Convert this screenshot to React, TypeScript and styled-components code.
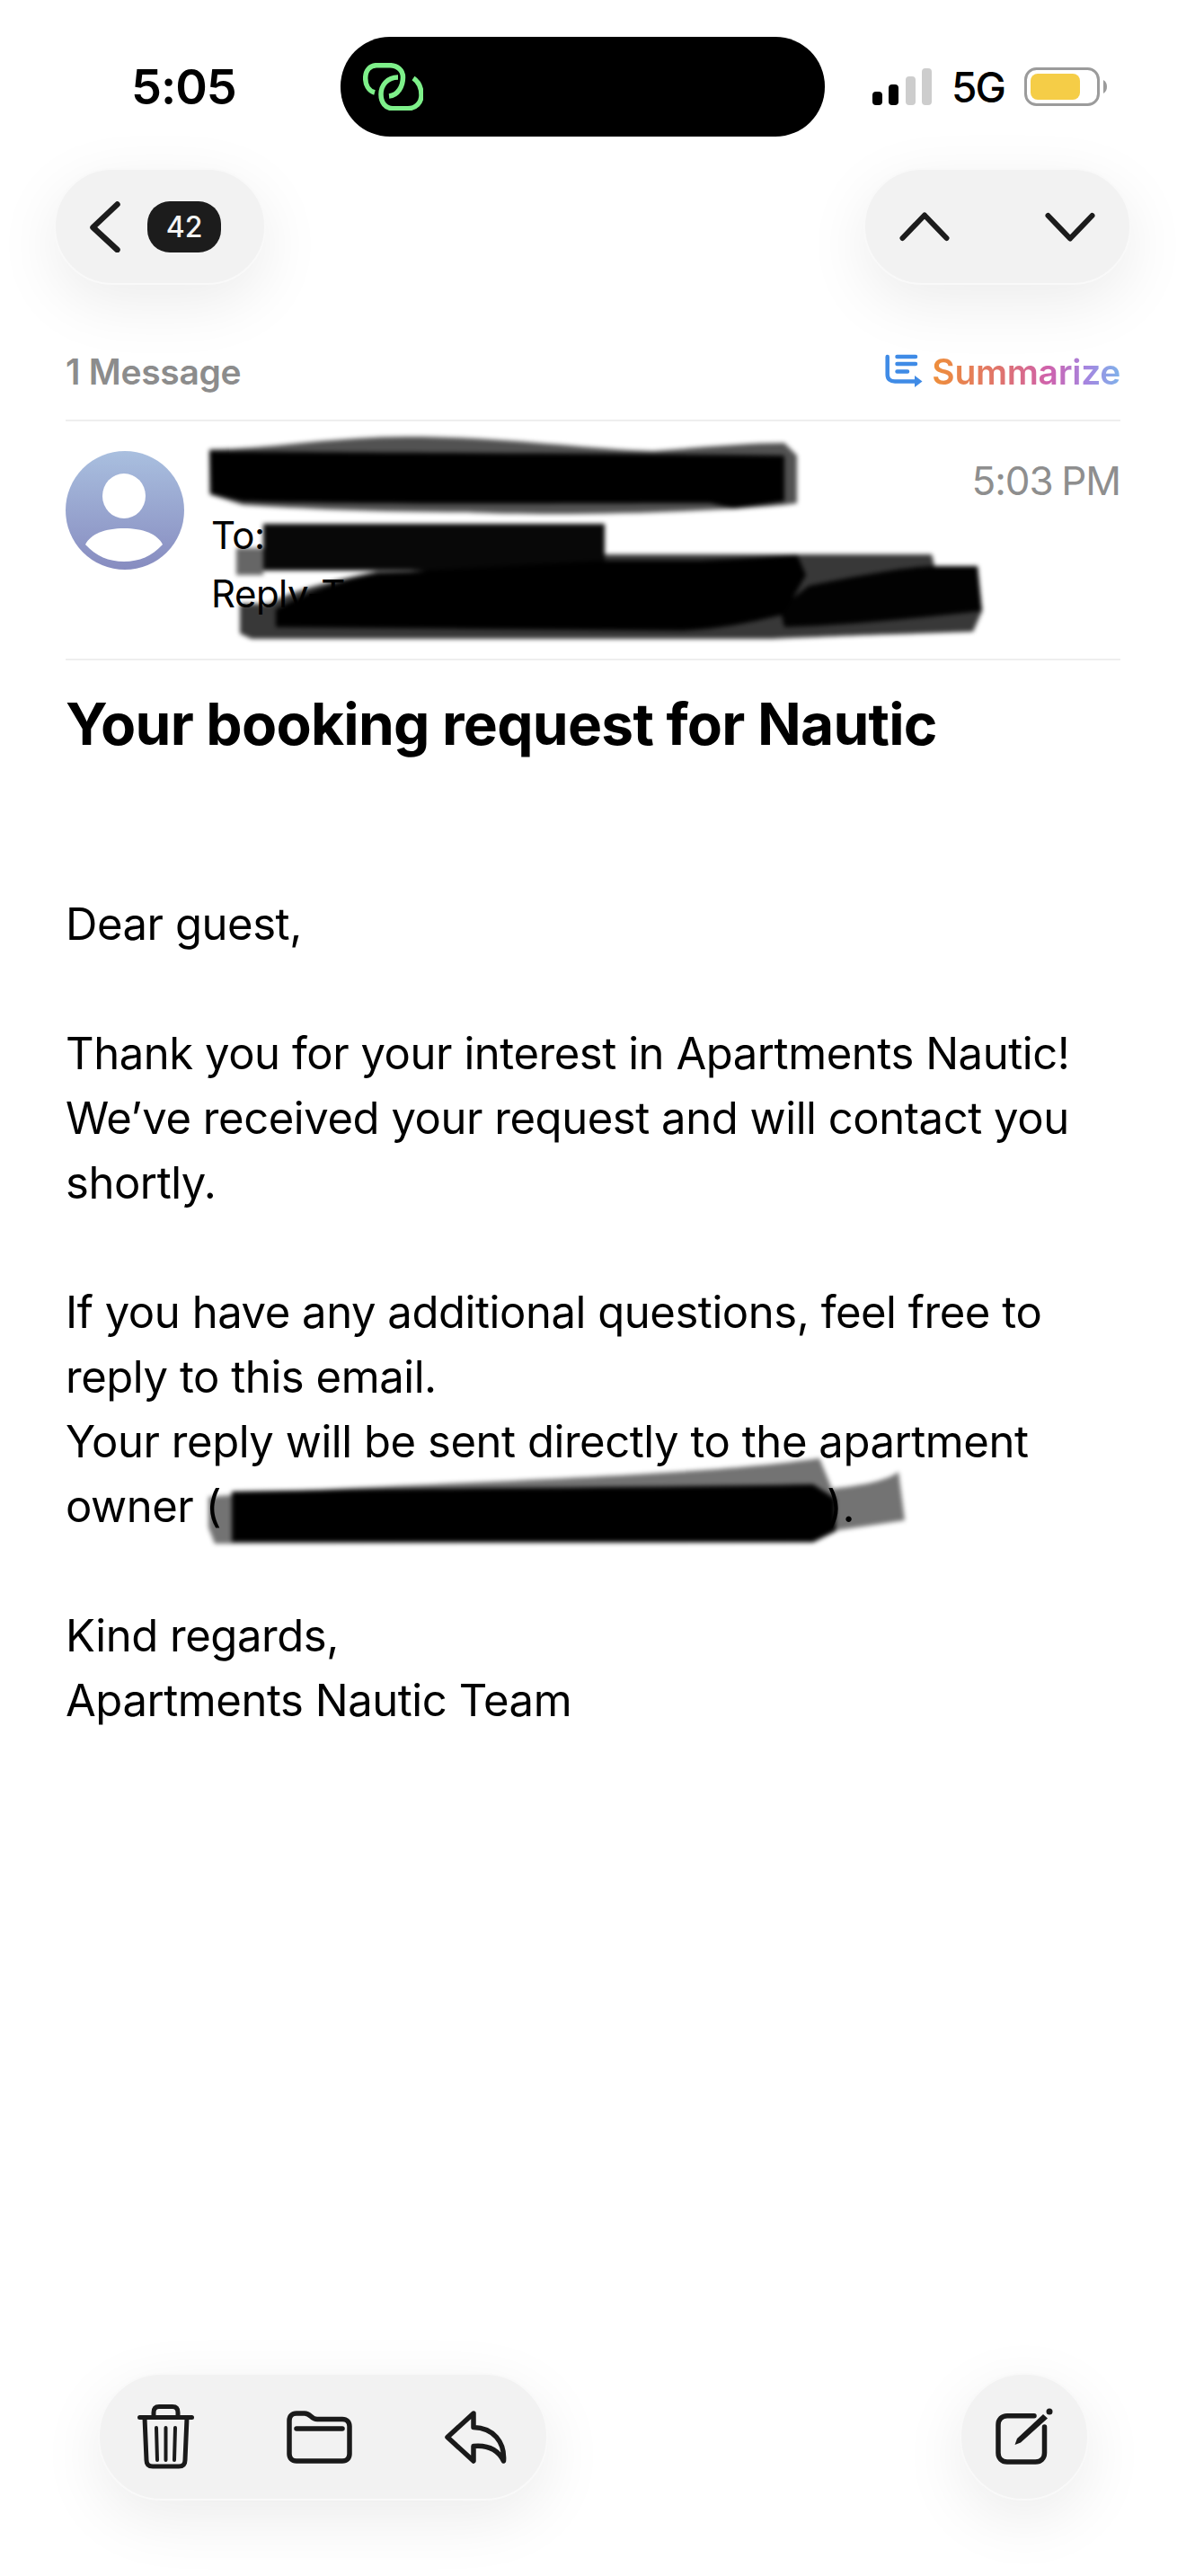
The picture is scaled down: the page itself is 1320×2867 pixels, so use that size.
import React from "react";
import styled, { createGlobalStyle } from "styled-components";

const GlobalStyle = createGlobalStyle`
    html, body {
        margin: 0;
        padding: 0;
        background: #fff;
    }
    body {
        font-family: Inter, "Liberation Sans", sans-serif;
        color: #000;
    }
`;

const Page = styled.div`
    position: relative;
    width: 1320px;
    height: 2867px;
    overflow: hidden;
    display: flex;
    flex-direction: column;
    background: #fff;
`;

const StatusBar = styled.div`
    display: flex;
    align-items: center;
    padding: 41px 0 0 146px;
    height: 111px;
`;
const Clock = styled.div`
    width: 233px;
    font-size: 54px;
    font-weight: 600;
    line-height: 60px;
    letter-spacing: -1px;
`;
const Island = styled.div`
    width: 539px;
    height: 111px;
    border-radius: 55px;
    background: #000;
    display: flex;
    align-items: center;
    padding-left: 25px;
    box-sizing: border-box;
`;
const StatusRight = styled.div`
    display: flex;
    align-items: center;
    margin-left: 53px;
`;
const Network = styled.span`
    font-size: 46px;
    font-weight: 500;
    line-height: 50px;
    margin: 0 22px 0 22px;
    letter-spacing: -2px;
`;

const NavRow = styled.div`
    display: flex;
    justify-content: space-between;
    margin-top: 35px;
    padding: 0 61px 0 60px;
`;
const Glass = styled.div<{ $w: number; $h: number }>`
    width: ${props => props.$w}px;
    height: ${props => props.$h}px;
    box-sizing: border-box;
    border-radius: ${props => props.$h / 2}px;
    background: #f2f2f2;
    border: 2px solid #f9f9f9;
    box-shadow: 0 20px 70px rgba(0, 0, 0, .08);
    display: flex;
    align-items: center;
`;
const BackGlass = styled(Glass)`
    padding-left: 38px;
`;
const ArrowGlass = styled(Glass)`
    justify-content: space-between;
    padding: 0 38px;
`;
const Badge = styled.div`
    width: 82px;
    height: 57px;
    margin-left: 30px;
    border-radius: 25px;
    background: #1c1c1c;
    color: #f4f4f4;
    font-size: 32px;
    font-weight: 500;
    display: flex;
    align-items: center;
    justify-content: center;
`;

const Content = styled.div`
    padding: 0 73px;
`;
const MessageBar = styled.div`
    display: flex;
    justify-content: space-between;
    align-items: center;
    margin-top: 73px;
    height: 46px;
    padding-bottom: 31px;
    border-bottom: 2px solid #eeeeee;
`;
const MessageCount = styled.div`
    font-size: 39px;
    font-weight: 600;
    color: #8c8c8c;
    letter-spacing: -.3px;
`;
const SummarizeWrap = styled.div`
    display: flex;
    align-items: center;
    gap: 10px;
`;
const SummarizeText = styled.span`
    font-size: 39px;
    font-weight: 600;
    letter-spacing: -.3px;
    background: linear-gradient(90deg, #ee8f3a 0%, #e0746a 35%, #cf62ad 62%, #a585e0 82%, #7fb2ea 100%);
    -webkit-background-clip: text;
    background-clip: text;
    color: transparent;
`;

const SenderBlock = styled.div`
    display: flex;
    padding: 33px 0 40px;
    border-bottom: 2px solid #eeeeee;
`;
const SenderInfo = styled.div`
    flex: 1;
    margin-left: 30px;
    padding-top: 61px;
`;
const SenderLine = styled.div`
    font-size: 42px;
    line-height: 65px;
    letter-spacing: -.5px;
`;
const SentAt = styled.div`
    margin-top: 8px;
    font-size: 44px;
    line-height: 50px;
    color: #8e8e8e;
    letter-spacing: -1px;
    word-spacing: -2px;
`;

const Subject = styled.h1`
    margin: 32px 0 148px;
    font-size: 64px;
    font-weight: 700;
    line-height: 78px;
    letter-spacing: -.75px;
`;
const Body = styled.div`
    font-size: 49px;
    line-height: 72px;
    letter-spacing: -.45px;
`;
const Para = styled.p`
    margin: 0 0 72px;
`;
const Hidden = styled.span`
    display: inline-block;
    width: 674px;
`;

const Toolbar = styled.div`
    display: flex;
    justify-content: space-between;
    margin-top: auto;
    padding: 0 108px 84px 109px;
`;
const ToolGroup = styled(Glass)`
    padding: 0 44px 0 42px;
    justify-content: space-between;
`;
const ComposeButton = styled(Glass)`
    justify-content: center;
`;

const Redactions = styled.svg`
    position: absolute;
    top: 0;
    left: 0;
    pointer-events: none;
`;

const LinkIcon = () => (
    <svg width="67" height="53" viewBox="0 0 67 53" fill="none" stroke="#7ef08a" strokeWidth="5.500">
        <path d="M13 33 C6 31 2.700 24 2.700 17 C2.700 8 8 2.700 15 2.700 H30 C38 2.700 44.500 8 44.500 16 C44.500 26 39 36 29 37" />
        <path d="M39 16 C27 16 20 25 20 35 C20 44 25 50.700 33 50.700 H50 C59 50.700 65 44 65 36 C65 28 62 21 56 17" />
    </svg>
);
const BackIcon = () => (
    <svg width="34" height="57" viewBox="0 0 34 57" fill="none" stroke="#1c1c1c" strokeWidth="6.500" strokeLinecap="round" strokeLinejoin="round">
        <path d="M30.500 3.500 L3.500 29 L30.500 54" />
    </svg>
);
const UpIcon = () => (
    <svg width="56" height="33" viewBox="0 0 56 33" fill="none" stroke="#1c1c1c" strokeWidth="6" strokeLinecap="round" strokeLinejoin="round">
        <path d="M3.500 29 L28 3.500 L52.500 29" />
    </svg>
);
const DownIcon = () => (
    <svg width="56" height="33" viewBox="0 0 56 33" fill="none" stroke="#1c1c1c" strokeWidth="6" strokeLinecap="round" strokeLinejoin="round">
        <path d="M3.500 4 L28 29.500 L52.500 4" />
    </svg>
);
const SignalIcon = () => (
    <svg width="66" height="41" viewBox="0 0 66 41">
        <rect x="0" y="26" width="11" height="15" rx="4" fill="#000" />
        <rect x="18" y="18" width="11" height="23" rx="4" fill="#000" />
        <rect x="37" y="9" width="11" height="32" rx="4" fill="#cdcdcd" />
        <rect x="55" y="0" width="11" height="41" rx="4" fill="#cdcdcd" />
    </svg>
);
const BatteryIcon = () => (
    <svg width="92" height="43" viewBox="0 0 92 43">
        <rect x="1.500" y="1.500" width="81" height="40" rx="12" fill="#fff" stroke="#9b9b9b" strokeWidth="3" />
        <rect x="7" y="7" width="55" height="29" rx="8" fill="#f5cd47" />
        <path d="M88 14 C91 16 92 18 92 21.500 C92 25 91 27 88 29 Z" fill="#9b9b9b" />
    </svg>
);
const SummarizeIcon = () => (
    <svg width="42" height="38" viewBox="0 0 42 38" fill="none" stroke="#3f8be6" strokeWidth="4.500" strokeLinecap="round" strokeLinejoin="round">
        <path d="M2.700 3 V23 C2.700 28 6 30.500 11 30.500 H34" />
        <path d="M33 24 L41.500 30.500 L33 37 Z" fill="#3f8be6" stroke="none" />
        <path d="M13.500 3 H34 M13.500 11 H34 M13.500 19.500 H25" />
    </svg>
);
const Avatar = () => (
    <svg width="132" height="132" viewBox="0 0 132 132">
        <defs>
            <linearGradient id="avatarFill" x1="0" y1="0" x2="0" y2="1">
                <stop offset="0" stopColor="#a9bfdf" />
                <stop offset="1" stopColor="#878cc0" />
            </linearGradient>
        </defs>
        <circle cx="66" cy="66" r="66" fill="url(#avatarFill)" />
        <ellipse cx="65" cy="50" rx="24" ry="25" fill="#fff" />
        <path d="M22 104 C28 92 44 86 65 86 C86 86 102 92 108 104 C96 117 82 123 65 123 C48 123 34 117 22 104 Z" fill="#fff" />
    </svg>
);
const TrashIcon = () => (
    <svg width="63" height="72" viewBox="0 0 63 72" fill="none" stroke="#1a1a1a" strokeWidth="5" strokeLinecap="round" strokeLinejoin="round">
        <path d="M18 13 V9 C18 5 20 2.500 24 2.500 H39 C43 2.500 45 5 45 9 V13" />
        <path d="M2.500 14.500 H60.500" />
        <path d="M8 15 L10 62 C10 66.500 12.500 69 17 69 H46 C50.500 69 53 66.500 53 62 L55 15" />
        <path d="M21 26 L22 62 M31.500 26 V62 M42 26 L41 62" strokeWidth="4" />
    </svg>
);
const FolderIcon = () => (
    <svg width="73" height="59" viewBox="0 0 73 59" fill="none" stroke="#1a1a1a" strokeWidth="5.500" strokeLinecap="round" strokeLinejoin="round">
        <path d="M3 11 C3 6 6 3 11 3 H20 C27 3 27 9.500 34 9.500 H62 C67 9.500 70 12.500 70 17.500 V48 C70 53 67 56 62 56 H11 C6 56 3 53 3 48 Z" />
        <path d="M11 20 H62" />
    </svg>
);
const ReplyIcon = () => (
    <svg width="69" height="59" viewBox="0 0 69 59" fill="none" stroke="#1a1a1a" strokeWidth="5.500" strokeLinecap="round" strokeLinejoin="round">
        <path d="M32 3 L3 29.500 L32 56 V39.500 C48 38 59 43 65.500 56 C67 35 54 19 32 18.500 Z" />
    </svg>
);
const ComposeIcon = () => (
    <svg width="64" height="64" viewBox="0 0 64 64" fill="none" stroke="#1a1a1a" strokeWidth="5.500" strokeLinecap="round">
        <path d="M43 8.750 H13 C7 8.750 3 12.750 3 18.750 V50 C3 56 7 60 13 60 H44.500 C50.500 60 54.500 56 54.500 50 V21" />
        <path d="M21.500 41 L24 34 L53 7 L58 11.500 L28 38.500 Z" fill="#1a1a1a" stroke="none" />
        <circle cx="60" cy="4" r="3.500" fill="#1a1a1a" stroke="none" />
    </svg>
);

const App: React.FC = () => {
    return <>
        <GlobalStyle />
        <Page>
            <StatusBar>
                <Clock>5:05</Clock>
                <Island><LinkIcon /></Island>
                <StatusRight>
                    <SignalIcon />
                    <Network>5G</Network>
                    <BatteryIcon />
                </StatusRight>
            </StatusBar>
            <NavRow>
                <BackGlass $w={236} $h={130}>
                    <BackIcon />
                    <Badge>42</Badge>
                </BackGlass>
                <ArrowGlass $w={298} $h={130}>
                    <UpIcon />
                    <DownIcon />
                </ArrowGlass>
            </NavRow>
            <Content>
                <MessageBar>
                    <MessageCount>1 Message</MessageCount>
                    <SummarizeWrap>
                        <SummarizeIcon />
                        <SummarizeText>Summarize</SummarizeText>
                    </SummarizeWrap>
                </MessageBar>
                <SenderBlock>
                    <Avatar />
                    <SenderInfo>
                        <SenderLine>To:</SenderLine>
                        <SenderLine>Reply-To:</SenderLine>
                    </SenderInfo>
                    <SentAt>5:03 PM</SentAt>
                </SenderBlock>
                <Subject>Your booking request for Nautic</Subject>
                <Body>
                    <Para>Dear guest,</Para>
                    <Para>Thank you for your interest in Apartments Nautic! We’ve received your request and will contact you shortly.</Para>
                    <Para>
                        If you have any additional questions, feel free to reply to this email.<br />
                        Your reply will be sent directly to the apartment owner (<Hidden />).
                    </Para>
                    <Para>Kind regards,<br />Apartments Nautic Team</Para>
                </Body>
            </Content>
            <Toolbar>
                <ToolGroup $w={501} $h={142}>
                    <TrashIcon />
                    <FolderIcon />
                    <ReplyIcon />
                </ToolGroup>
                <ComposeButton $w={144} $h={142}>
                    <ComposeIcon />
                </ComposeButton>
            </Toolbar>
            {/* marker scribbles painted over the private details */}
            <Redactions width="1320" height="2867" viewBox="0 0 1320 2867">
                <defs>
                    <filter id="soft" x="-5%" y="-20%" width="110%" height="140%">
                        <feGaussianBlur stdDeviation="2.500" />
                    </filter>
                </defs>
                <g filter="url(#soft)">
                    {/* sender */}
                    <path d="M233 500 C300 500 370 486 453 486 C560 486 650 500 727 502 C780 498 830 493 873 493 L887 507 V560 L873 562 C760 572 600 574 520 570 C420 570 330 566 270 562 L233 550 Z" fill="#000" fillOpacity=".68" />
                    <path d="M233 502 C400 504 640 504 873 507 V558 L817 566 L790 560 C640 560 420 562 270 558 L235 550 Z" fill="#000" />
                    {/* to */}
                    <path d="M263 610 H293 V640 H263 Z" fill="#000" fillOpacity=".6" />
                    <path d="M293 583 H673 V635 H293 Z" fill="#000" fillOpacity=".97" />
                    {/* reply-to */}
                    <path d="M267 672 L300 672 C320 660 350 650 420 636 H673 V617 H1037 L1040 630 H1088 L1093 680 L1083 703 L993 706 C930 708 880 710 860 711 L280 711 L267 705 Z" fill="#000" fillOpacity=".78" />
                    <path d="M307 698 V678 C330 666 360 650 420 638 L673 624 L780 624 C820 622 860 620 887 617 L897 640 L872 684 C830 694 800 700 760 702 Z" fill="#000" />
                    <path d="M868 677 L900 652 C950 642 1000 632 1037 630 L1088 630 L1093 680 C1020 688 940 696 873 698 Z" fill="#000" fillOpacity=".96" />
                    {/* owner address */}
                    <path d="M232 1666 C420 1650 760 1646 912 1623 L926 1657 C950 1654 985 1650 1000 1638 L1007 1692 L933 1703 L905 1717 L239 1718 L232 1700 Z" fill="#000" fillOpacity=".55" />
                    <path d="M258 1660 C440 1656 700 1656 905 1652 L930 1668 V1704 L905 1716 H258 Z" fill="#000" />
                </g>
            </Redactions>
        </Page>
    </>;
};

export default App;
